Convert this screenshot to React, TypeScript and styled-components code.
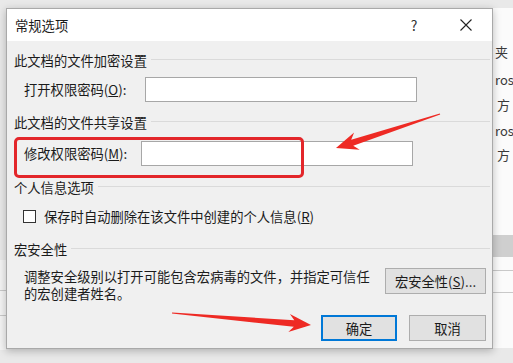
import styled, { createGlobalStyle } from "styled-components";

const GlobalStyle = createGlobalStyle`
  html, body {
    margin: 0;
    padding: 0;
    background: #e9e9e9;
  }
  body {
    font-family: "Noto Sans CJK SC", "Noto Sans", sans-serif;
    color: #1b1b1b;
    overflow: hidden;
  }
`

const Desktop = styled.div`
  position: relative;
  width: 513px;
  height: 363px;
  padding: 8px 0 0 6px;
  box-sizing: border-box;
  background: #e9e9e9;
  overflow: hidden;
`

const BackWindow = styled.div`
  position: absolute;
  top: 8px;
  left: 480px;
  width: 40px;
  height: 340px;
  background: #fbfbfb;
`

const BackText = styled.div<{ $top: number; $left: number; $blue?: boolean }>`
  position: absolute;
  top: ${p => p.$top}px;
  left: ${p => p.$left}px;
  font-size: 13px;
  line-height: 16px;
  white-space: nowrap;
  color: ${p => (p.$blue ? "#2a6fc9" : "#3a3a3a")};
`

const BackBar = styled.div<{ $top: number; $height: number; $left: number; $width: number; $bg: string }>`
  position: absolute;
  top: ${p => p.$top}px;
  left: ${p => p.$left}px;
  width: ${p => p.$width}px;
  height: ${p => p.$height}px;
  background: ${p => p.$bg};
`

const Dialog = styled.div`
  position: relative;
  z-index: 1;
  width: 487px;
  height: 341px;
  box-sizing: border-box;
  border: 1px solid #a9a9a9;
  background: #f0f0f0;
  box-shadow: 0 2px 8px rgba(0, 0, 0, 0.25);
  display: flex;
  flex-direction: column;
`

const TitleBar = styled.div`
  height: 32px;
  background: #fff;
  display: flex;
  align-items: center;
  padding-left: 8px;
  font-size: 13.3px;
`

const Title = styled.span`
  flex: 1;
`

const TitleButton = styled.span`
  width: 52px;
  height: 32px;
  display: flex;
  align-items: center;
  justify-content: center;
  font-size: 14px;
  color: #333;
`

const Body = styled.div`
  flex: 1;
  display: flex;
  flex-direction: column;
  padding: 0 2px 0 7px;
  font-size: 13.3px;
`

const Heading = styled.div<{ $mt: number }>`
  margin-top: ${p => p.$mt}px;
  height: 18px;
  display: flex;
  align-items: center;
  gap: 4px;
  line-height: 18px;

  &::after {
    content: "";
    flex: 1;
    height: 1px;
    background: #dadada;
    margin-top: -4px;
  }
`

const Row = styled.div<{ $mt: number; $top?: boolean }>`
  margin-top: ${p => p.$mt}px;
  padding-left: 10px;
  display: flex;
  align-items: ${p => (p.$top ? "flex-start" : "center")};
`

const Label = styled.span<{ $w: number }>`
  width: ${p => p.$w}px;
  white-space: nowrap;
`

const Input = styled.div`
  width: 272px;
  height: 25px;
  box-sizing: border-box;
  background: #fff;
  border: 1px solid #a7a7a7;
`

const Check = styled.span`
  width: 13px;
  height: 13px;
  box-sizing: border-box;
  border: 1px solid #333;
  background: #fff;
  margin: 0 8px 0 -1px;
`

const MacroText = styled.div`
  width: 352px;
  margin-right: 9px;
  line-height: 17px;
`

const Button = styled.div<{ $primary?: boolean; $w: number }>`
  width: ${p => p.$w}px;
  height: 26px;
  box-sizing: border-box;
  display: flex;
  align-items: center;
  justify-content: center;
  background: #e1e1e1;
  border: 1px solid ${p => (p.$primary ? "#0078d7" : "#adadad")};
  box-shadow: ${p => (p.$primary ? "inset 0 0 0 1px #0078d7" : "none")};
  font-size: 13.3px;
  white-space: nowrap;
`

const Footer = styled.div`
  margin-top: 13px;
  display: flex;
  justify-content: flex-end;
  gap: 12px;
  padding-right: 4px;
`

const Highlight = styled.div`
  position: absolute;
  left: 7px;
  top: 128px;
  width: 290px;
  height: 41px;
  box-sizing: border-box;
  border: 3px solid #e3262a;
  border-radius: 5px;
  pointer-events: none;
`

const Overlay = styled.svg`
  position: absolute;
  left: 0;
  top: 0;
  z-index: 2;
  pointer-events: none;
`

function arrow(x1: number, y1: number, x2: number, y2: number) {
  const dx = x2 - x1
  const dy = y2 - y1
  const len = Math.hypot(dx, dy)
  const ux = dx / len
  const uy = dy / len
  const nx = -uy
  const ny = ux
  const head = 22
  const bx = x2 - ux * head
  const by = y2 - uy * head
  const sx = x2 - ux * (head - 5)
  const sy = y2 - uy * (head - 5)
  const pt = (x: number, y: number) => `${x.toFixed(1)},${y.toFixed(1)}`
  return [
    pt(x1 + nx * 0.6, y1 + ny * 0.6),
    pt(sx + nx * 3.2, sy + ny * 3.2),
    pt(bx + nx * 9, by + ny * 9),
    pt(x2, y2),
    pt(bx - nx * 9, by - ny * 9),
    pt(sx - nx * 3.2, sy - ny * 3.2),
    pt(x1 - nx * 0.6, y1 - ny * 0.6),
  ].join(" ")
}

export default function App() {
  return (
    <>
      <GlobalStyle />
      <Desktop>
        <BackWindow />
        <BackText $top={44} $left={495}>夹</BackText>
        <BackText $top={72} $left={495}>ros</BackText>
        <BackText $top={97} $left={497}>方</BackText>
        <BackText $top={123} $left={495}>ros</BackText>
        <BackText $top={147} $left={497}>方</BackText>
        <BackBar $top={235} $height={22} $left={480} $width={40} $bg="#cfcfcf" />
        <BackBar $top={270} $height={1} $left={480} $width={40} $bg="#c9c9c9" />
        <BackBar $top={292} $height={1} $left={480} $width={40} $bg="#c9c9c9" />
        <BackBar $top={260} $height={90} $left={0} $width={6} $bg="#f4f4f4" />
        <BackBar $top={290} $height={1} $left={0} $width={6} $bg="#c9c9c9" />
        <BackBar $top={315} $height={1} $left={0} $width={6} $bg="#c9c9c9" />

        <Dialog>
          <TitleBar>
            <Title>常规选项</Title>
            <TitleButton>?</TitleButton>
            <TitleButton>
              <svg width="12" height="12" viewBox="0 0 12 12">
                <path d="M0.5 0.5 L11.5 11.5 M11.5 0.5 L0.5 11.5" stroke="#222" strokeWidth="1.1" />
              </svg>
            </TitleButton>
          </TitleBar>
          <Body>
            <Heading $mt={11}>此文档的文件加密设置</Heading>
            <Row $mt={7}>
              <Label $w={121}>打开权限密码(<u>O</u>):</Label>
              <Input />
            </Row>
            <Heading $mt={12}>此文档的文件共享设置</Heading>
            <Row $mt={9}>
              <Label $w={117}>修改权限密码(<u>M</u>):</Label>
              <Input />
            </Row>
            <Heading $mt={13}>个人信息选项</Heading>
            <Row $mt={10}>
              <Check />
              <span>保存时自动删除在该文件中创建的个人信息(<u>R</u>)</span>
            </Row>
            <Heading $mt={15}>宏安全性</Heading>
            <Row $mt={9} $top>
              <MacroText>调整安全级别以打开可能包含宏病毒的文件，并指定可信任的宏创建者姓名。</MacroText>
              <Button $w={101}>宏安全性(<u>S</u>)...</Button>
            </Row>
            <Footer>
              <Button $w={76} $primary>确定</Button>
              <Button $w={77}>取消</Button>
            </Footer>
          </Body>
          <Highlight />
        </Dialog>

        <Overlay width="513" height="363" viewBox="0 0 513 363">
          <polygon points={arrow(440, 114, 336, 148)} fill="#ee2a24" />
          <polygon points={arrow(172, 313, 311, 325)} fill="#ee2a24" />
        </Overlay>
      </Desktop>
    </>
  )
}
